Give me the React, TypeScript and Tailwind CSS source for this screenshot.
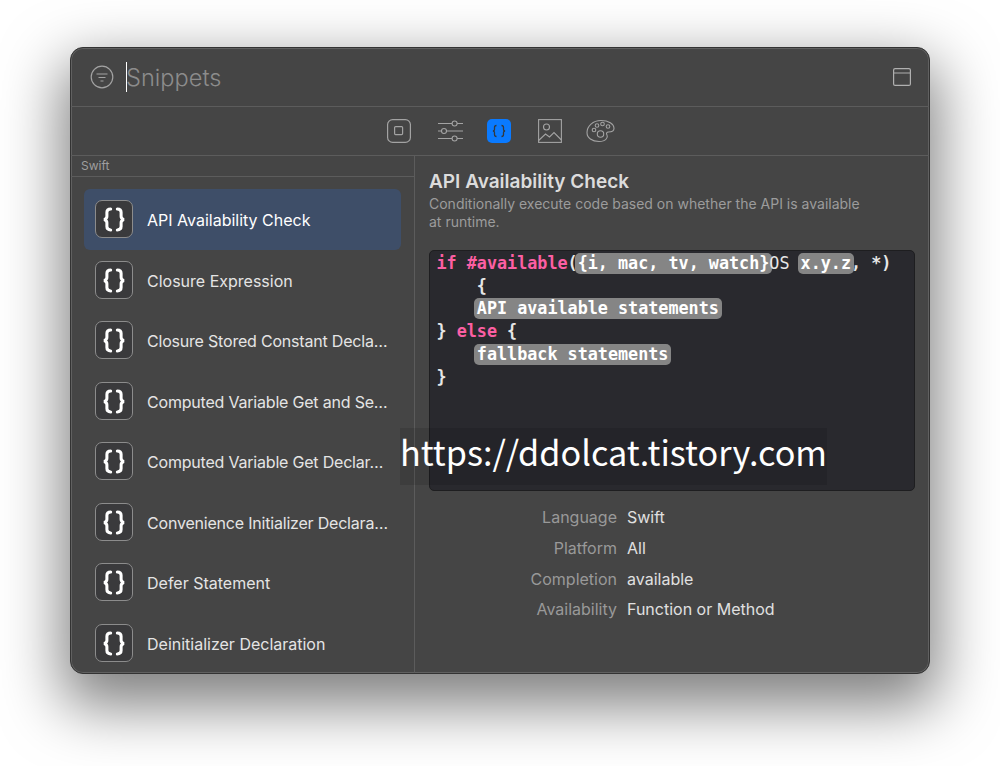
const snippets = [
  'API Availability Check',
  'Closure Expression',
  'Closure Stored Constant Decla…',
  'Computed Variable Get and Se…',
  'Computed Variable Get Declar…',
  'Convenience Initializer Declara…',
  'Defer Statement',
  'Deinitializer Declaration',
];

const details = [
  { label: 'Language', value: 'Swift', height: 'h-[31px]' },
  { label: 'Platform', value: 'All', height: 'h-[31px]' },
  { label: 'Completion', value: 'available', height: 'h-[31px]' },
  { label: 'Availability', value: 'Function or Method', height: 'h-[30px]' },
];

function BraceIcon() {
  return (
    <div className="flex h-[38px] w-[38px] shrink-0 items-center justify-center rounded-[7px] border border-[#8c8c8c] bg-[#3a3a3c]">
      <svg width="38" height="38" viewBox="0 0 38 38" fill="none" stroke="white" strokeWidth="3.2" strokeLinecap="round">
        <path d="M15.5 8.5C12.5 8.5 11.5 9.5 11.5 12V16C11.5 18 10.5 19 8.5 19.5C10.5 20 11.5 21 11.5 23V27C11.5 29.5 12.5 30.5 15.5 30.5" />
        <path d="M22.5 8.5C25.5 8.5 26.5 9.5 26.5 12V16C26.5 18 27.5 19 29.5 19.5C27.5 20 26.5 21 26.5 23V27C26.5 29.5 25.5 30.5 22.5 30.5" />
      </svg>
    </div>
  );
}

function Token({ children }: { children: string }) {
  return <span className="-mx-[3px] inline-block rounded-[5px] bg-[#858585] px-[3px] leading-[21px] text-white">{children}</span>;
}

function Toolbar() {
  return (
    <div className="flex h-[49px] shrink-0 items-center justify-center border-b border-[#5c5c5c] pl-[2px] text-[#a3a3a3]">
      <svg width="24" height="24" viewBox="0 0 24 24" fill="none" stroke="currentColor" strokeWidth="1.2">
        <rect x="0.6" y="0.6" width="22.8" height="22.8" rx="5" />
        <rect x="7.6" y="7.6" width="8" height="8" rx="1" />
      </svg>
      <svg className="ml-[27px]" width="25" height="24" viewBox="0 0 25 24" fill="none" stroke="currentColor" strokeWidth="1.1">
        <path d="M0 4.5H14M19 4.5H25M0 12H3M9 12H25M0 19.5H14M19 19.5H25" />
        <circle cx="16.6" cy="4.5" r="2.5" />
        <circle cx="6" cy="12" r="2.5" />
        <circle cx="16.6" cy="19.5" r="2.5" />
      </svg>
      <div className="ml-[24px] flex h-[24px] w-[24px] items-center justify-center rounded-[5px] bg-[#0a7aff]">
        <svg width="16" height="16" viewBox="0 0 16 16" fill="none" stroke="#33393f" strokeWidth="1.3">
          <path d="M5.5 2.5C3.8 2.5 3.5 3 3.5 4.5V6.5C3.5 7.4 3 7.8 2 8C3 8.2 3.5 8.6 3.5 9.5V11.5C3.5 13 3.8 13.5 5.5 13.5" />
          <path d="M10.5 2.5C12.2 2.5 12.5 3 12.5 4.5V6.5C12.5 7.4 13 7.8 14 8C13 8.2 12.5 8.6 12.5 9.5V11.5C12.5 13 12.2 13.5 10.5 13.5" />
        </svg>
      </div>
      <svg className="ml-[27px]" width="24" height="24" viewBox="0 0 24 24" fill="none" stroke="currentColor" strokeWidth="1.1">
        <rect x="0.6" y="0.6" width="22.8" height="22.8" />
        <circle cx="8.5" cy="8" r="3" />
        <path d="M0.6 21.5L7.5 15L11.5 18L16 13.5L23.4 21" />
      </svg>
      <svg className="ml-[24px]" width="29" height="24" viewBox="0 0 29 24" fill="none" stroke="currentColor" strokeWidth="1.1">
        <path d="M15 1.5C22.5 1.5 28 5 28 9.5C28 13 24.5 13 22.5 13C20.5 13 20 14.5 21 16C22 18 20.5 22.5 13 22.5C6 22.5 1 19 1 13.5C1 7 7 1.5 15 1.5Z" />
        <circle cx="8" cy="11" r="1.8" />
        <circle cx="11" cy="6.5" r="1.8" />
        <circle cx="16.5" cy="5" r="1.8" />
        <circle cx="22" cy="7.5" r="1.8" />
        <circle cx="14.5" cy="15" r="3.2" />
      </svg>
    </div>
  );
}

export default function App() {
  return (
    <div className="h-[766px] w-[1000px] overflow-hidden bg-white pl-[70px] pt-[47px] font-['Inter',sans-serif]">
      <div className="relative flex h-[627px] w-[860px] flex-col overflow-hidden rounded-[13px] border border-[#333333] bg-[#454545] shadow-[inset_0_0_0_1px_#606060,0_24px_60px_8px_rgba(0,0,0,0.5)]">
        {/* Search bar */}
        <div className="flex h-[59px] shrink-0 items-center border-b border-[#5c5c5c] pl-[19px] pr-[18px]">
          <svg width="24" height="24" viewBox="0 0 24 24" fill="none" stroke="#a3a3a3" strokeWidth="1.2">
            <circle cx="12" cy="12" r="10.8" />
            <path d="M6.5 9H17.5M8.5 12.5H15.5M10.5 16H13.5" />
          </svg>
          <div className="ml-[12px] h-[30px] w-[1px] bg-white" />
          <span className="mt-[1px] -ml-[1px] text-[23.6px] font-light text-[#8c8c8c]">Snippets</span>
          <svg className="ml-auto" width="18" height="18" viewBox="0 0 18 18" fill="none" stroke="#b0b0b0" strokeWidth="1.2">
            <rect x="0.6" y="0.6" width="16.8" height="16.8" rx="1.5" />
            <path d="M0.6 5H17.4" />
          </svg>
        </div>

        <Toolbar />

        <div className="flex min-h-0 flex-1">
          {/* Snippet list */}
          <div className="w-[344px] shrink-0 border-r border-[#5c5c5c]">
            <div className="flex h-[21px] items-center border-b border-[#5c5c5c] pl-[10px] text-[12px] text-[#9f9f9f]">Swift</div>
            <div className="px-[13px] pt-[12px]">
              {snippets.map((name, i) => (
                <div
                  key={name}
                  className={`flex h-[60.5px] items-center gap-[14px] rounded-[6px] pl-[11px] text-[16px] ${i === 0 ? 'bg-[#3e4e68] text-white' : 'text-[#e4e4e4]'}`}
                >
                  <BraceIcon />
                  <span className={`mt-[2px] whitespace-nowrap ${name.endsWith('…') ? 'tracking-[-0.2px]' : ''}`}>{name}</span>
                </div>
              ))}
            </div>
          </div>

          {/* Detail pane */}
          <div className="min-w-0 flex-1 pl-[14px] pr-[14px] pt-[15px]">
            <div className="text-[19px] font-semibold leading-[22px] text-[#dcdcdc]">API Availability Check</div>
            <p className="mt-[2px] w-[440px] text-[14px] leading-[17.5px] text-[#9c9c9c]">
              Conditionally execute code based on whether the API is available
              <br />
              at runtime.
            </p>
            <div className="mt-[20px] h-[241px] rounded-[5px] border border-[#1e1e20] bg-[#29292e] pl-[6.5px] pt-[1px] font-['DejaVu_Sans_Mono',monospace] text-[16.75px] font-bold leading-[22.7px] text-[#e6e6e6]">
              <div className="whitespace-pre">
                <span className="text-[#fc5fa3]">if #available</span>(<Token>{'{i, mac, tv, watch}'}</Token>
                <span className="font-normal">OS </span>
                <span className="ml-[1px]"><Token>x.y.z</Token></span>, *)
              </div>
              <div className="whitespace-pre">{'    {'}</div>
              <div className="whitespace-pre">
                {'    '}
                <Token>API available statements</Token>
              </div>
              <div className="whitespace-pre">
                {'} '}
                <span className="text-[#fc5fa3]">else</span>
                {' {'}
              </div>
              <div className="whitespace-pre">
                {'    '}
                <Token>fallback statements</Token>
              </div>
              <div className="whitespace-pre">{'}'}</div>
            </div>
            <div className="mt-[10px] text-[16px]">
              {details.map((row) => (
                <div key={row.label} className={`flex items-center ${row.height}`}>
                  <span className="w-[188px] text-right text-[#999999]">{row.label}</span>
                  <span className="ml-[10px] text-[#e0e0e0]">{row.value}</span>
                </div>
              ))}
            </div>
          </div>
        </div>

        {/* Watermark */}
        <div className="absolute left-[329px] top-[380px] flex h-[57px] w-[427px] items-center justify-center bg-black/10 pb-[10px] font-['Noto_Sans_CJK_KR',sans-serif] text-[34.2px] text-white">
          https://ddolcat.tistory.com
        </div>
      </div>
    </div>
  );
}
